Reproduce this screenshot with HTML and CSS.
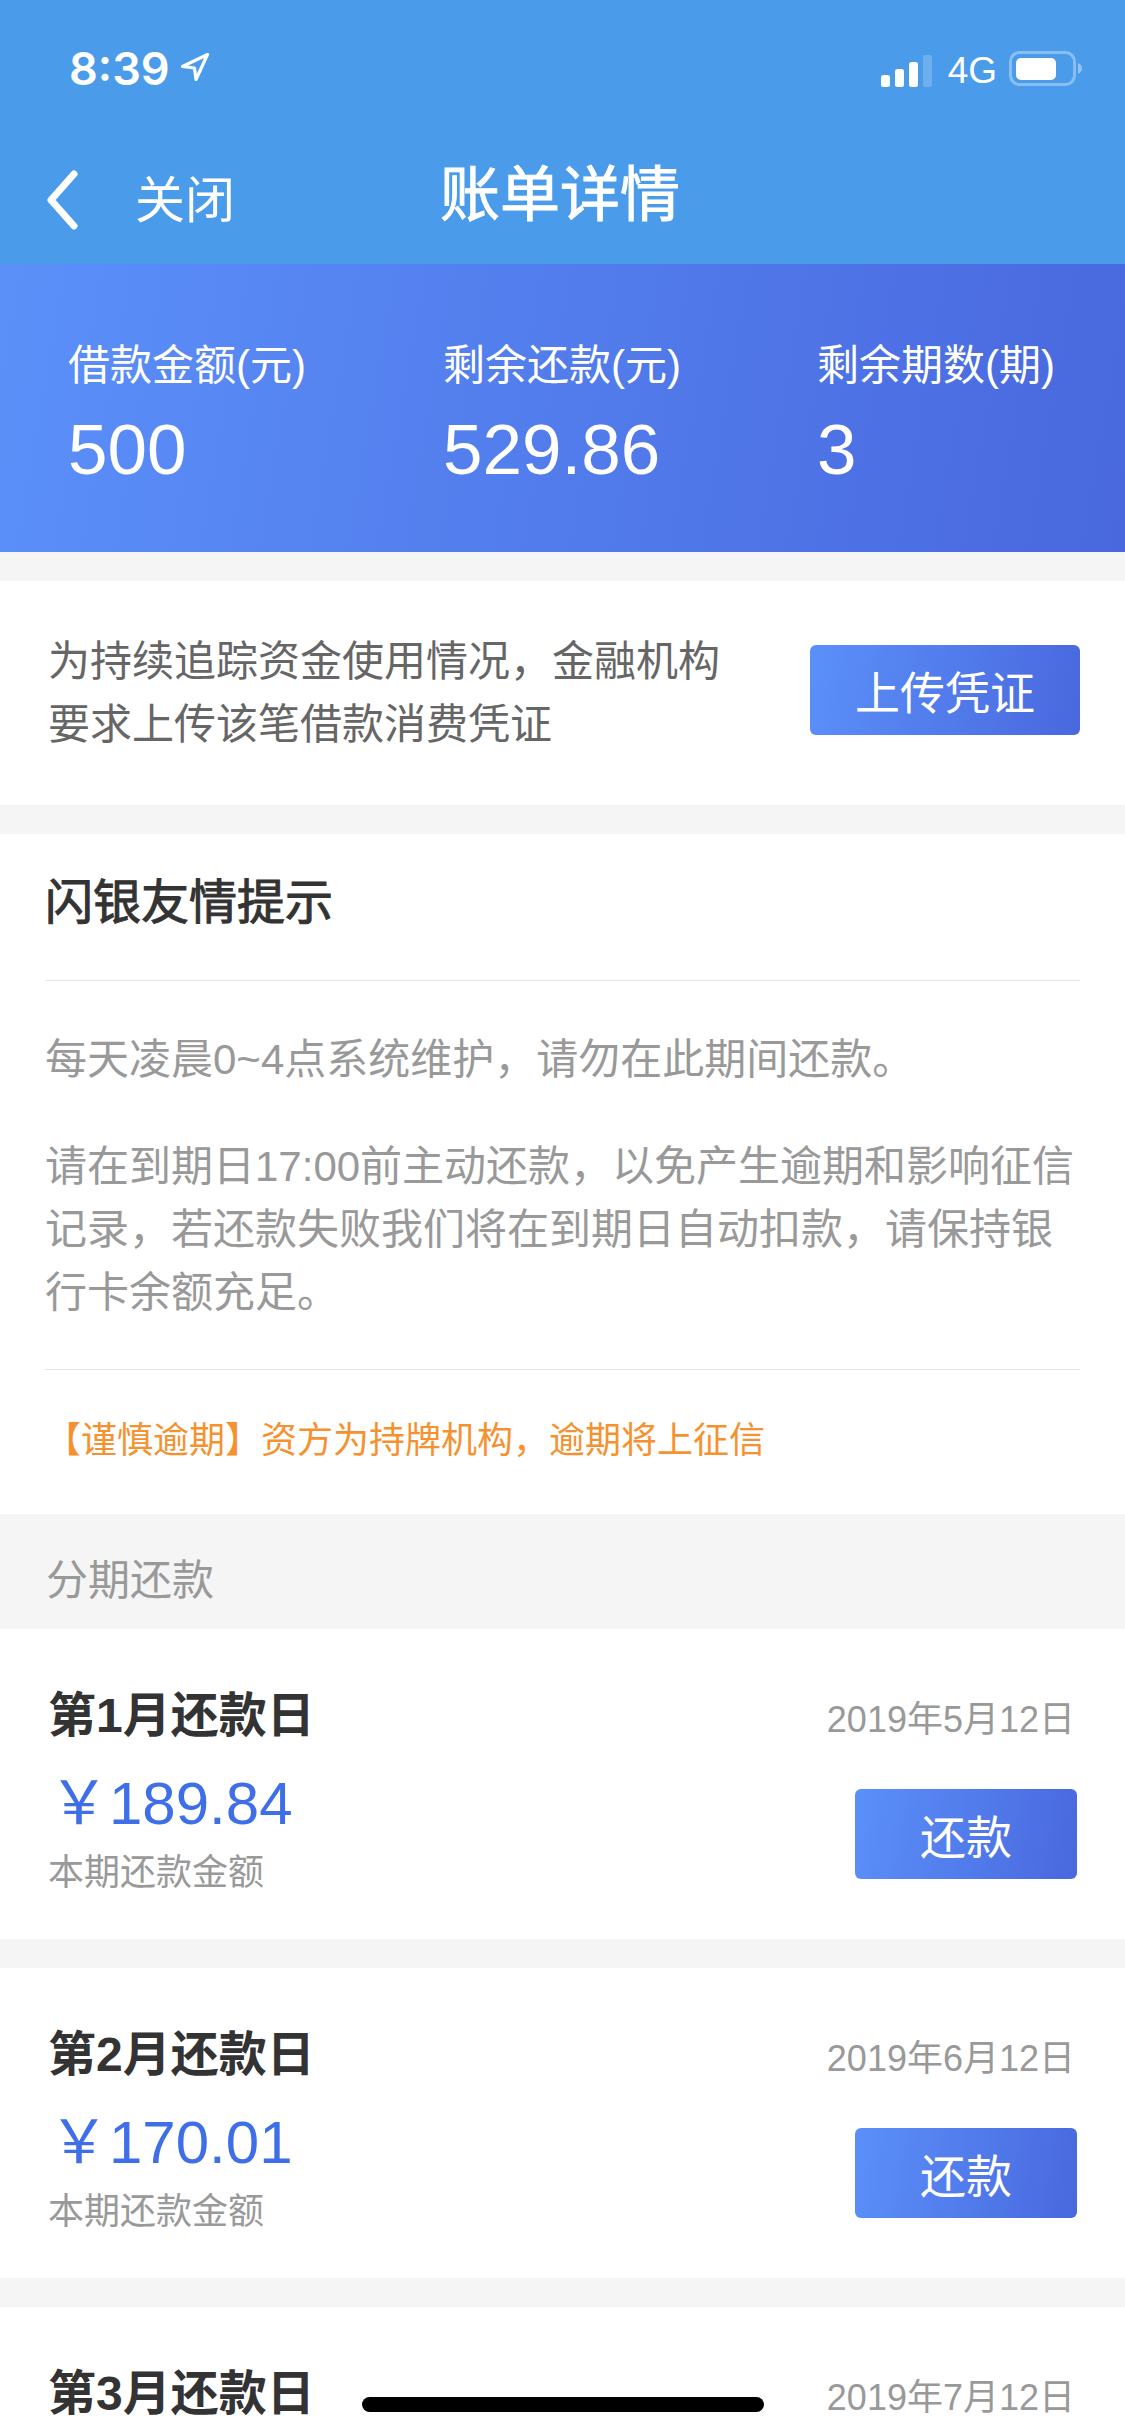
FILE: index.html
```html
<!DOCTYPE html>
<html lang="zh-CN">

<head>
    <meta charset="UTF-8">
    <meta name="viewport" content="width=device-width, initial-scale=1.0">
    <title>账单详情</title>
    <link rel="stylesheet" href="styles.css">
</head>

<body>
    <div id="page">
        <div class="top-bar">
            <div class="status-bar">
                <div class="status-left">
                    <span class="status-time">8:39</span>
                    <svg class="status-arrow" width="30" height="30" viewBox="0 0 30 30">
                        <path d="M27.5 2.5 L2.5 14.5 L14.5 16 L16 27.5 Z" fill="none" stroke="#fff" stroke-width="3.2" stroke-linejoin="round"/>
                    </svg>
                </div>
                <div class="status-right">
                    <svg width="52" height="32" viewBox="0 0 52 32">
                        <rect x="0" y="20" width="9" height="12" rx="2.5" fill="#fff"/>
                        <rect x="14" y="14" width="9" height="18" rx="2.5" fill="#fff"/>
                        <rect x="28" y="7" width="9" height="25" rx="2.5" fill="#fff"/>
                        <rect x="42" y="0" width="9" height="32" rx="2.5" fill="#fff" opacity="0.2"/>
                    </svg>
                    <span class="status-net">4G</span>
                    <svg class="status-battery" width="74" height="36" viewBox="0 0 74 36">
                        <rect x="1.5" y="1.5" width="64" height="32" rx="9" fill="none" stroke="#fff" stroke-width="3" opacity="0.35"/>
                        <rect x="7" y="7" width="40" height="22" rx="5" fill="#fff"/>
                        <path d="M69 12 C72 13.5 73 15.5 73 17.5 C73 19.5 72 21.5 69 23 Z" fill="#fff" opacity="0.4"/>
                    </svg>
                </div>
            </div>
            <div class="nav-bar">
                <svg class="nav-back" width="32" height="64" viewBox="0 0 32 64">
                    <path d="M27 6 L4 32 L27 58" fill="none" stroke="#fff" stroke-width="7" stroke-linecap="round" stroke-linejoin="round"/>
                </svg>
                <span class="nav-close">关闭</span>
                <span class="nav-title">账单详情</span>
            </div>
        </div>

        <div class="summary">
            <div class="summary-item">
                <div class="summary-label">借款金额(元)</div>
                <div class="summary-value">500</div>
            </div>
            <div class="summary-item">
                <div class="summary-label">剩余还款(元)</div>
                <div class="summary-value">529.86</div>
            </div>
            <div class="summary-item">
                <div class="summary-label">剩余期数(期)</div>
                <div class="summary-value">3</div>
            </div>
        </div>

        <div class="card voucher">
            <div class="voucher-text">为持续追踪资金使用情况，金融机构<br>要求上传该笔借款消费凭证</div>
            <div class="btn btn-upload">上传凭证</div>
        </div>

        <div class="card notice">
            <div class="notice-title">闪银友情提示</div>
            <div class="notice-body">
                <p>每天凌晨0~4点系统维护，请勿在此期间还款。</p>
                <p>请在到期日17:00前主动还款，以免产生逾期和影响征信记录，若还款失败我们将在到期日自动扣款，请保持银行卡余额充足。</p>
            </div>
            <div class="notice-warn">【谨慎逾期】资方为持牌机构，逾期将上征信</div>
        </div>

        <div class="section-title">分期还款</div>

        <div class="card bill">
            <div class="bill-head">
                <span class="bill-name">第1月还款日</span>
                <span class="bill-date">2019年5月12日</span>
            </div>
            <div class="bill-main">
                <div>
                    <div class="bill-amount">￥189.84</div>
                    <div class="bill-note">本期还款金额</div>
                </div>
                <div class="btn btn-pay">还款</div>
            </div>
        </div>

        <div class="card bill">
            <div class="bill-head">
                <span class="bill-name">第2月还款日</span>
                <span class="bill-date">2019年6月12日</span>
            </div>
            <div class="bill-main">
                <div>
                    <div class="bill-amount">￥170.01</div>
                    <div class="bill-note">本期还款金额</div>
                </div>
                <div class="btn btn-pay">还款</div>
            </div>
        </div>

        <div class="card bill">
            <div class="bill-head">
                <span class="bill-name">第3月还款日</span>
                <span class="bill-date">2019年7月12日</span>
            </div>
        </div>

        <div class="home-bar"></div>
    </div>
</body>

</html>
```

FILE: styles.css
```css
* {
    box-sizing: border-box;
}

html,
body {
    margin: 0;
    padding: 0;
}

#page {
    position: relative;
    width: 1125px;
    height: 2436px;
    overflow: hidden;
    background-color: #f5f5f5;
    font-family: "Liberation Sans", "Noto Sans CJK SC", sans-serif;
}

/* top */
.top-bar {
    height: 264px;
    background-color: #4a9ceb;
    color: #fff;
}

.status-bar {
    display: flex;
    justify-content: space-between;
    align-items: center;
    height: 136px;
    padding: 0 42px 0 69px;
}

.status-left {
    display: flex;
    align-items: center;
}

.status-time {
    font-family: Inter, sans-serif;
    font-size: 45px;
    font-weight: 600;
}

.status-arrow {
    margin-left: 10px;
    margin-top: -2px;
}

.status-right {
    display: flex;
    align-items: center;
    padding-top: 5px;
}

.status-net {
    margin: 0 12px 0 15px;
    font-size: 37px;
}

.status-battery {
    margin-top: -3px;
}

.nav-bar {
    display: flex;
    align-items: center;
    position: relative;
    height: 128px;
    padding-left: 47px;
}

.nav-close {
    margin-top: -8px;
    margin-left: 56px;
    font-size: 50px;
}

.nav-title {
    position: absolute;
    left: 440px;
    top: 24px;
    font-size: 60px;
    line-height: 72px;
    -webkit-text-stroke: 1px #fff;
}

/* summary */
.summary {
    display: grid;
    grid-template-columns: 375px 374px 1fr;
    height: 288px;
    padding: 73px 0 0 68px;
    background: linear-gradient(100deg, #5b90f9, #4968de);
    color: #fff;
}

.summary-label {
    font-size: 42px;
    line-height: 58px;
}

.summary-value {
    margin-top: 13px;
    font-size: 71px;
    line-height: 84px;
}

/* cards */
.card {
    background-color: #fff;
}

.btn {
    display: flex;
    justify-content: center;
    align-items: center;
    height: 90px;
    border-radius: 6px;
    background: linear-gradient(100deg, #5b90f9, #4968de);
    color: #fff;
}

.voucher {
    display: flex;
    justify-content: space-between;
    align-items: center;
    height: 224px;
    margin-top: 29px;
    padding: 0 45px 0 48px;
}

.voucher-text {
    font-size: 42px;
    line-height: 63px;
    color: #666;
}

.btn-upload {
    width: 270px;
    margin-bottom: 6px;
    font-size: 45px;
}

.notice {
    height: 680px;
    margin-top: 29px;
    padding: 0 45px;
}

.notice-title {
    height: 147px;
    padding-top: 37px;
    border-bottom: 1px solid #e6e6e6;
    font-size: 48px;
    line-height: 64px;
    color: #333;
    -webkit-text-stroke: 1px #333;
}

.notice-body {
    height: 389px;
    padding-top: 47px;
    border-bottom: 1px solid #e6e6e6;
    font-size: 42px;
    line-height: 63px;
    color: #999;
}

.notice-body p {
    margin: 0 0 44px;
}

.notice-warn {
    padding-top: 47px;
    font-size: 36px;
    line-height: 48px;
    color: #f5922f;
}

.section-title {
    height: 115px;
    padding: 36px 0 0 46px;
    font-size: 42px;
    line-height: 62px;
    color: #999;
}

.bill {
    height: 310px;
    margin-bottom: 29px;
    padding: 52px 48px 0 48px;
}

.bill-head {
    display: flex;
    justify-content: space-between;
    align-items: center;
    height: 60px;
}

.bill-name {
    font-size: 48px;
    font-weight: 700;
    color: #333;
}

.bill-date {
    margin: 10px 2px 0 0;
    font-size: 36px;
    color: #999;
}

.bill-main {
    display: flex;
    justify-content: space-between;
    align-items: flex-start;
}

.bill-amount {
    margin-top: 29px;
    margin-left: 1px;
    font-size: 60px;
    line-height: 68px;
    color: #3f6fe8;
}

.bill-note {
    margin-top: 13px;
    font-size: 36px;
    line-height: 44px;
    color: #999;
}

.btn-pay {
    width: 222px;
    margin-top: 48px;
    font-size: 46px;
}

.home-bar {
    position: absolute;
    left: 362px;
    top: 2397px;
    width: 402px;
    height: 15px;
    border-radius: 8px;
    background-color: #000;
}
```
